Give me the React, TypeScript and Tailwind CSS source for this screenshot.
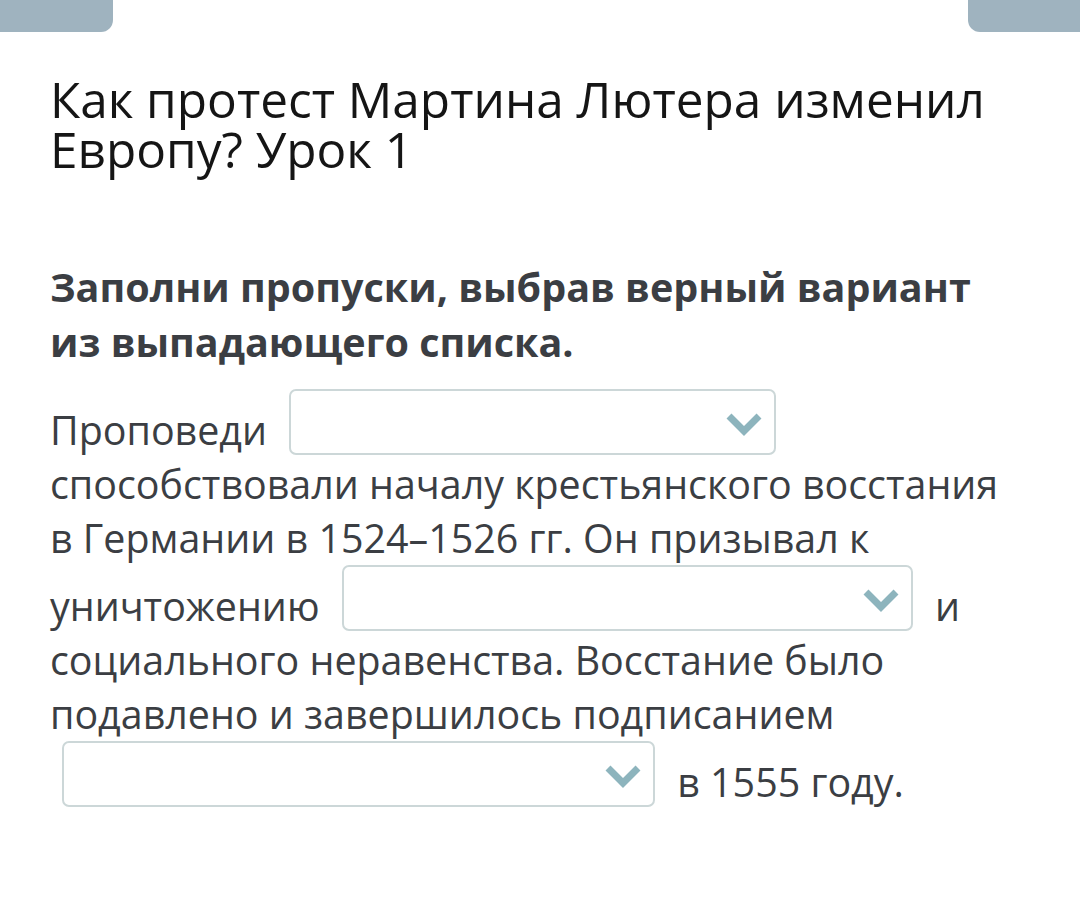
import React from "react";

function Select({ w }: { w: number }) {
  return (
    <span
      className="relative inline-block mx-[12px] h-[66px] rounded-[7px] border-2 border-[#ccd7d8] bg-white align-[-10px] box-border"
      style={{ width: w }}
    >
      <svg className="absolute right-[12px] top-[21px]" width="36" height="26" viewBox="0 0 36 26">
        <path d="M3 4 L18 19 L33 4" fill="none" stroke="#8db4bd" strokeWidth="7" strokeLinecap="butt" strokeLinejoin="miter" />
      </svg>
    </span>
  );
}

export default function App() {
  return (
    <div className="relative w-[1080px] h-[898px] bg-white overflow-hidden" style={{ fontFamily: '"Open Sans", "Noto Sans", sans-serif' }}>
      <div className="flex justify-between">
        <div className="w-[113px] h-[32px] bg-[#9fb3bf] rounded-br-[12px]" />
        <div className="w-[112px] h-[32px] bg-[#9fb3bf] rounded-bl-[12px]" />
      </div>
      <div className="pl-[50px] pr-[78px]">
        <h1 className="mt-[42px] text-[49.5px] leading-[50px] text-[#151515] font-normal">
          Как протест Мартина Лютера изменил Европу? Урок 1
        </h1>
        <p className="mt-[86px] text-[39.5px] leading-[55px] font-bold text-[#3b3e43]">
          Заполни пропуски, выбрав верный вариант из выпадающего списка.
        </p>
        <p className="mt-[19px] text-[39.4px] leading-[54px] text-[#3b3e43]">
          Проповеди <Select w={487} /> способствовали началу крестьянского восстания в Германии в 1524–1526 гг. Он призывал к уничтожению <Select w={571} /> и социального неравенства. Восстание было подавлено и завершилось подписанием <Select w={593} /> в 1555 году.
        </p>
      </div>
    </div>
  );
}
